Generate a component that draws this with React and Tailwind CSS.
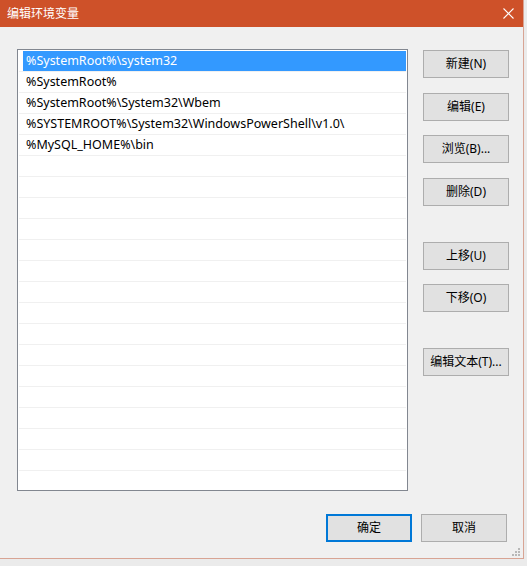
const paths = [
  '%SystemRoot%\\system32',
  '%SystemRoot%',
  '%SystemRoot%\\System32\\Wbem',
  '%SYSTEMROOT%\\System32\\WindowsPowerShell\\v1.0\\',
  '%MySQL_HOME%\\bin',
]

const FONT = "font-['Segoe_UI','Noto_Sans','Noto_Sans_CJK_SC',sans-serif]"

function Btn({ children, focused, className = '' }) {
  return (
    <button
      className={`h-[28px] w-[86px] bg-[#e1e1e1] text-[12px] text-black ${
        focused ? 'border-2 border-[#0078d7]' : 'border border-[#adadad]'
      } ${className}`}
    >
      {children}
    </button>
  )
}

function Grip() {
  // little dotted triangle in the corner
  const dots = [
    [6, 0],
    [3, 3],
    [6, 3],
    [0, 6],
    [3, 6],
    [6, 6],
  ]
  return (
    <svg width="8" height="8" className="absolute right-[3px] bottom-[2px]">
      {dots.map(([x, y]) => (
        <rect key={`${x}-${y}`} x={x} y={y} width="2" height="2" fill="#b8b8b8" />
      ))}
    </svg>
  )
}

export default function App() {
  const rows = Array.from({ length: 21 }, (_, i) => paths[i] ?? '')

  return (
    <div className={`w-[527px] h-[566px] bg-[#ebebeb] ${FONT}`}>
      <div className="relative w-[524px] h-[559px] bg-[#f0f0f0] border-r border-b border-[#d8a494] flex flex-col">
        <div className="h-[27px] bg-[#ce5129] flex items-center justify-between pl-[7px] pr-[9px] shrink-0">
          <span className="text-white text-[12px]">编辑环境变量</span>
          <svg width="11" height="11" viewBox="0 0 11 11">
            <path d="M0.5 0.5 L10.5 10.5 M10.5 0.5 L0.5 10.5" stroke="white" strokeWidth="1.1" />
          </svg>
        </div>

        <div className="flex pl-[17px] pt-[22px]">
          <div className="w-[391px] h-[442px] border border-[#828790] bg-white pt-[1px] px-[1px] overflow-hidden">
            {rows.map((p, i) => (
              <div key={i} className="h-[21px] border-b border-[#f0f0f0] flex">
                {i === 0 ? (
                  <div className="ml-[4px] flex-1 bg-[#3399ff] text-white text-[12.5px] flex items-center pl-[3px]">
                    {p}
                  </div>
                ) : (
                  <div className="flex-1 text-black text-[12.5px] flex items-center pl-[7px]">{p}</div>
                )}
              </div>
            ))}
          </div>

          <div className="ml-[15px] pt-[1px] flex flex-col">
            <Btn>新建(N)</Btn>
            <Btn className="mt-[15px]">编辑(E)</Btn>
            <Btn className="mt-[14px]">浏览(B)...</Btn>
            <Btn className="mt-[15px]">删除(D)</Btn>
            <Btn className="mt-[36px]">上移(U)</Btn>
            <Btn className="mt-[14px]">下移(O)</Btn>
            <Btn className="mt-[36px]">编辑文本(T)...</Btn>
          </div>
        </div>

        <div className="flex pl-[326px] pt-[23px] gap-[9px]">
          <Btn focused>确定</Btn>
          <Btn>取消</Btn>
        </div>

        <Grip />
      </div>
    </div>
  )
}
